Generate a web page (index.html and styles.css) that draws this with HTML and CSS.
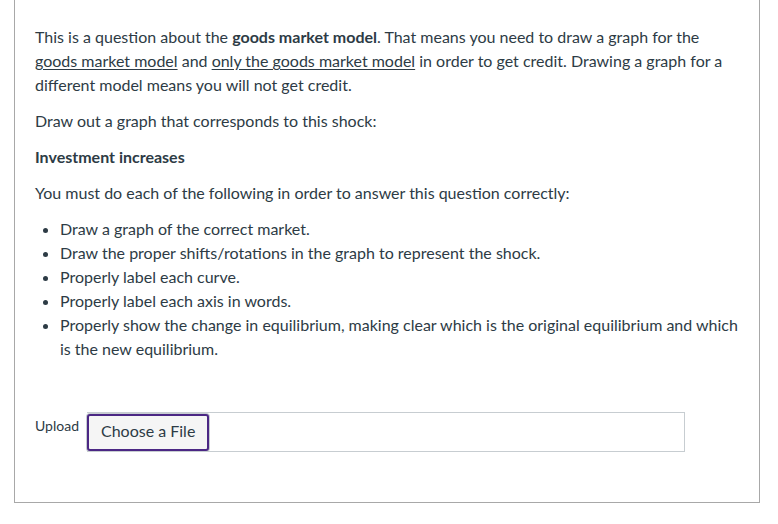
FILE: index.html
```html
<!DOCTYPE html>
<html>
<head>
<meta charset="utf-8">
<link rel="stylesheet" href="styles.css">
</head>
<body>
<div class="question">
  <p>This is a question about the <strong>goods market model</strong>. That means you need to draw a graph for the <u>goods market model</u> and <u>only the goods market model</u> in order to get credit. Drawing a graph for a different model means you will not get credit.</p>
  <p>Draw out a graph that corresponds to this shock:</p>
  <p><strong>Investment increases</strong></p>
  <p>You must do each of the following in order to answer this question correctly:</p>
  <ul>
    <li>Draw a graph of the correct market.</li>
    <li>Draw the proper shifts/rotations in the graph to represent the shock.</li>
    <li>Properly label each curve.</li>
    <li>Properly label each axis in words.</li>
    <li>Properly show the change in equilibrium, making clear which is the original equilibrium and which is the new equilibrium.</li>
  </ul>
  <div class="upload">
    <span class="upload-label">Upload</span>
    <div class="file-input">
      <span class="file-btn">Choose a File</span>
    </div>
  </div>
</div>
</body>
</html>
```
FILE: styles.css
```css
html, body {
  margin: 0;
  padding: 0;
  background: #fff;
}
body {
  font-family: Lato, "Noto Sans", sans-serif;
  color: #2d3b45;
  font-size: 16px;
  line-height: 24px;
}
.question {
  margin-left: 14px;
  width: 746px;
  border: 1px solid #a8a8a8;
  border-top: none;
  padding: 25px 20px 50px 20px;
  box-sizing: border-box;
}
p {
  margin: 0 0 12px;
}
strong {
  font-weight: 700;
}
u {
  text-decoration: underline;
  text-underline-offset: 2px;
}
ul {
  margin: 0 0 12px;
  padding-left: 25px;
}
.upload {
  display: flex;
  align-items: flex-start;
  gap: 8px;
  margin-top: 51px;
}
.upload-label {
  font-size: 14px;
  line-height: 20px;
  padding-top: 4px;
}
.file-input {
  width: 598px;
  height: 40px;
  box-sizing: border-box;
  border: 1px solid #c7cdd1;
  border-left: none;
  display: flex;
  align-items: center;
}
.file-btn {
  box-sizing: border-box;
  height: 37px;
  width: 122px;
  border: 2px solid #4b2784;
  border-radius: 3px;
  background: #f5f5f5;
  box-shadow: 0 0 0 1px #c7cdd1;
  font-size: 16px;
  line-height: 30px;
  padding-left: 12px;
  color: #2d3b45;
}
```
